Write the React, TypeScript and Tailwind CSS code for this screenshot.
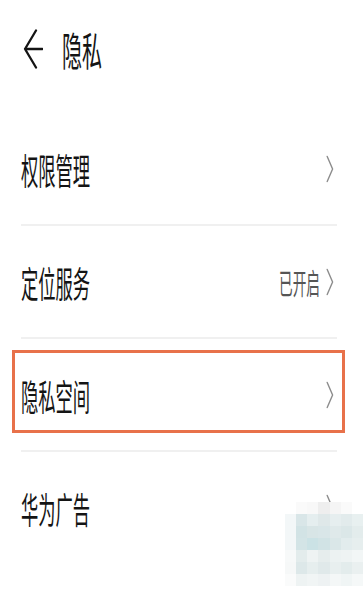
const mosaic: string[][] = [
  ['#ffffff', '#fafafa', '#f8f8f8', '#eeeeee', '#f5f5f5', '#fafafa', '#ffffff'],
  ['#f3f7f8', '#d9e6e8', '#e5eeef', '#dfe8e9', '#e6eeef', '#e2ebec', '#e8f0f0'],
  ['#f3f7f8', '#d2e3e5', '#d8e5e6', '#d9e6e8', '#dfe9ea', '#dbe7e8', '#e3ecec'],
  ['#f3f7f8', '#d3e4e6', '#cbe2e5', '#d1e3e5', '#dae7e8', '#e2eced', '#e6eeee'],
  ['#f7f9f9', '#e3ecec', '#eef3f3', '#e6eded', '#ecf2f2', '#eef3f3', '#f2f6f6'],
  ['#f6f8f8', '#dde8e9', '#e6eeee', '#e0e9ea', '#e8efef', '#e3ecec', '#eaf0f0'],
  ['#fafbfb', '#eef3f3', '#f1f5f5', '#eef2f3', '#f4f7f7', '#f0f5f5', '#f5f8f8'],
];

const rows = [
  { label: '权限管理' },
  { label: '定位服务', value: '已开启' },
  { label: '隐私空间' },
  { label: '华为广告' },
];

const Chevron = () => (
  <svg width="8" height="28" viewBox="0 0 8 28" fill="none">
    <path d="M1.2 1.5 L6.6 14 L1.2 26.5" stroke="#8c8c8c" strokeWidth="1.4" strokeLinecap="round" strokeLinejoin="round" />
  </svg>
);

export default function App() {
  return (
    <div
      className="relative w-[363px] h-[597px] overflow-hidden bg-white text-[#141414]"
      style={{ fontFamily: '"Noto Sans CJK SC", "Noto Sans", sans-serif' }}
    >
      {/* header */}
      <div className="flex items-center h-[98px]">
        <svg className="ml-[23px]" width="20" height="40" viewBox="0 0 20 40" fill="none">
          <path d="M13 1.5 L2 20 L13 38.5 M2 20 H19.5" stroke="#141414" strokeWidth="2.3" strokeLinecap="round" strokeLinejoin="round" />
        </svg>
        <div className="ml-[19px] w-[80px] h-[40px] flex items-center">
          <span className="inline-block origin-left scale-x-[0.5] text-[40px] leading-[40px] whitespace-nowrap">隐私</span>
        </div>
      </div>

      {/* list */}
      <div className="mt-[15px] pl-[21px] pr-[26px]">
        {rows.map((row, i) => (
          <div key={row.label}>
            <div className="flex items-center h-[111px]">
              <div className="flex-1 h-[40px] flex items-center">
                <span className="inline-block origin-left scale-x-[0.48] text-[36px] leading-[40px] whitespace-nowrap">
                  {row.label}
                </span>
              </div>
              {row.value && (
                <div className="w-[41px] h-[40px] mr-[6px] flex items-center">
                  <span className="inline-block origin-left scale-x-[0.47] text-[29px] leading-[40px] whitespace-nowrap text-[#555555]">
                    {row.value}
                  </span>
                </div>
              )}
              <div className="mr-[3px]">
                <Chevron />
              </div>
            </div>
            {i < rows.length - 1 && <div className="h-[2px] bg-[#f0f0f0]" />}
          </div>
        ))}
      </div>

      {/* highlight box */}
      <div className="absolute left-[12px] top-[350px] w-[333px] h-[83px] border-[3px] border-[#e8714a]" />

      {/* mosaic watermark */}
      <div className="absolute left-[285px] top-[502px] grid grid-cols-7">
        {mosaic.flat().map((c, i) => (
          <div key={i} className="w-[12px] h-[12px]" style={{ backgroundColor: c }} />
        ))}
      </div>
    </div>
  );
}
